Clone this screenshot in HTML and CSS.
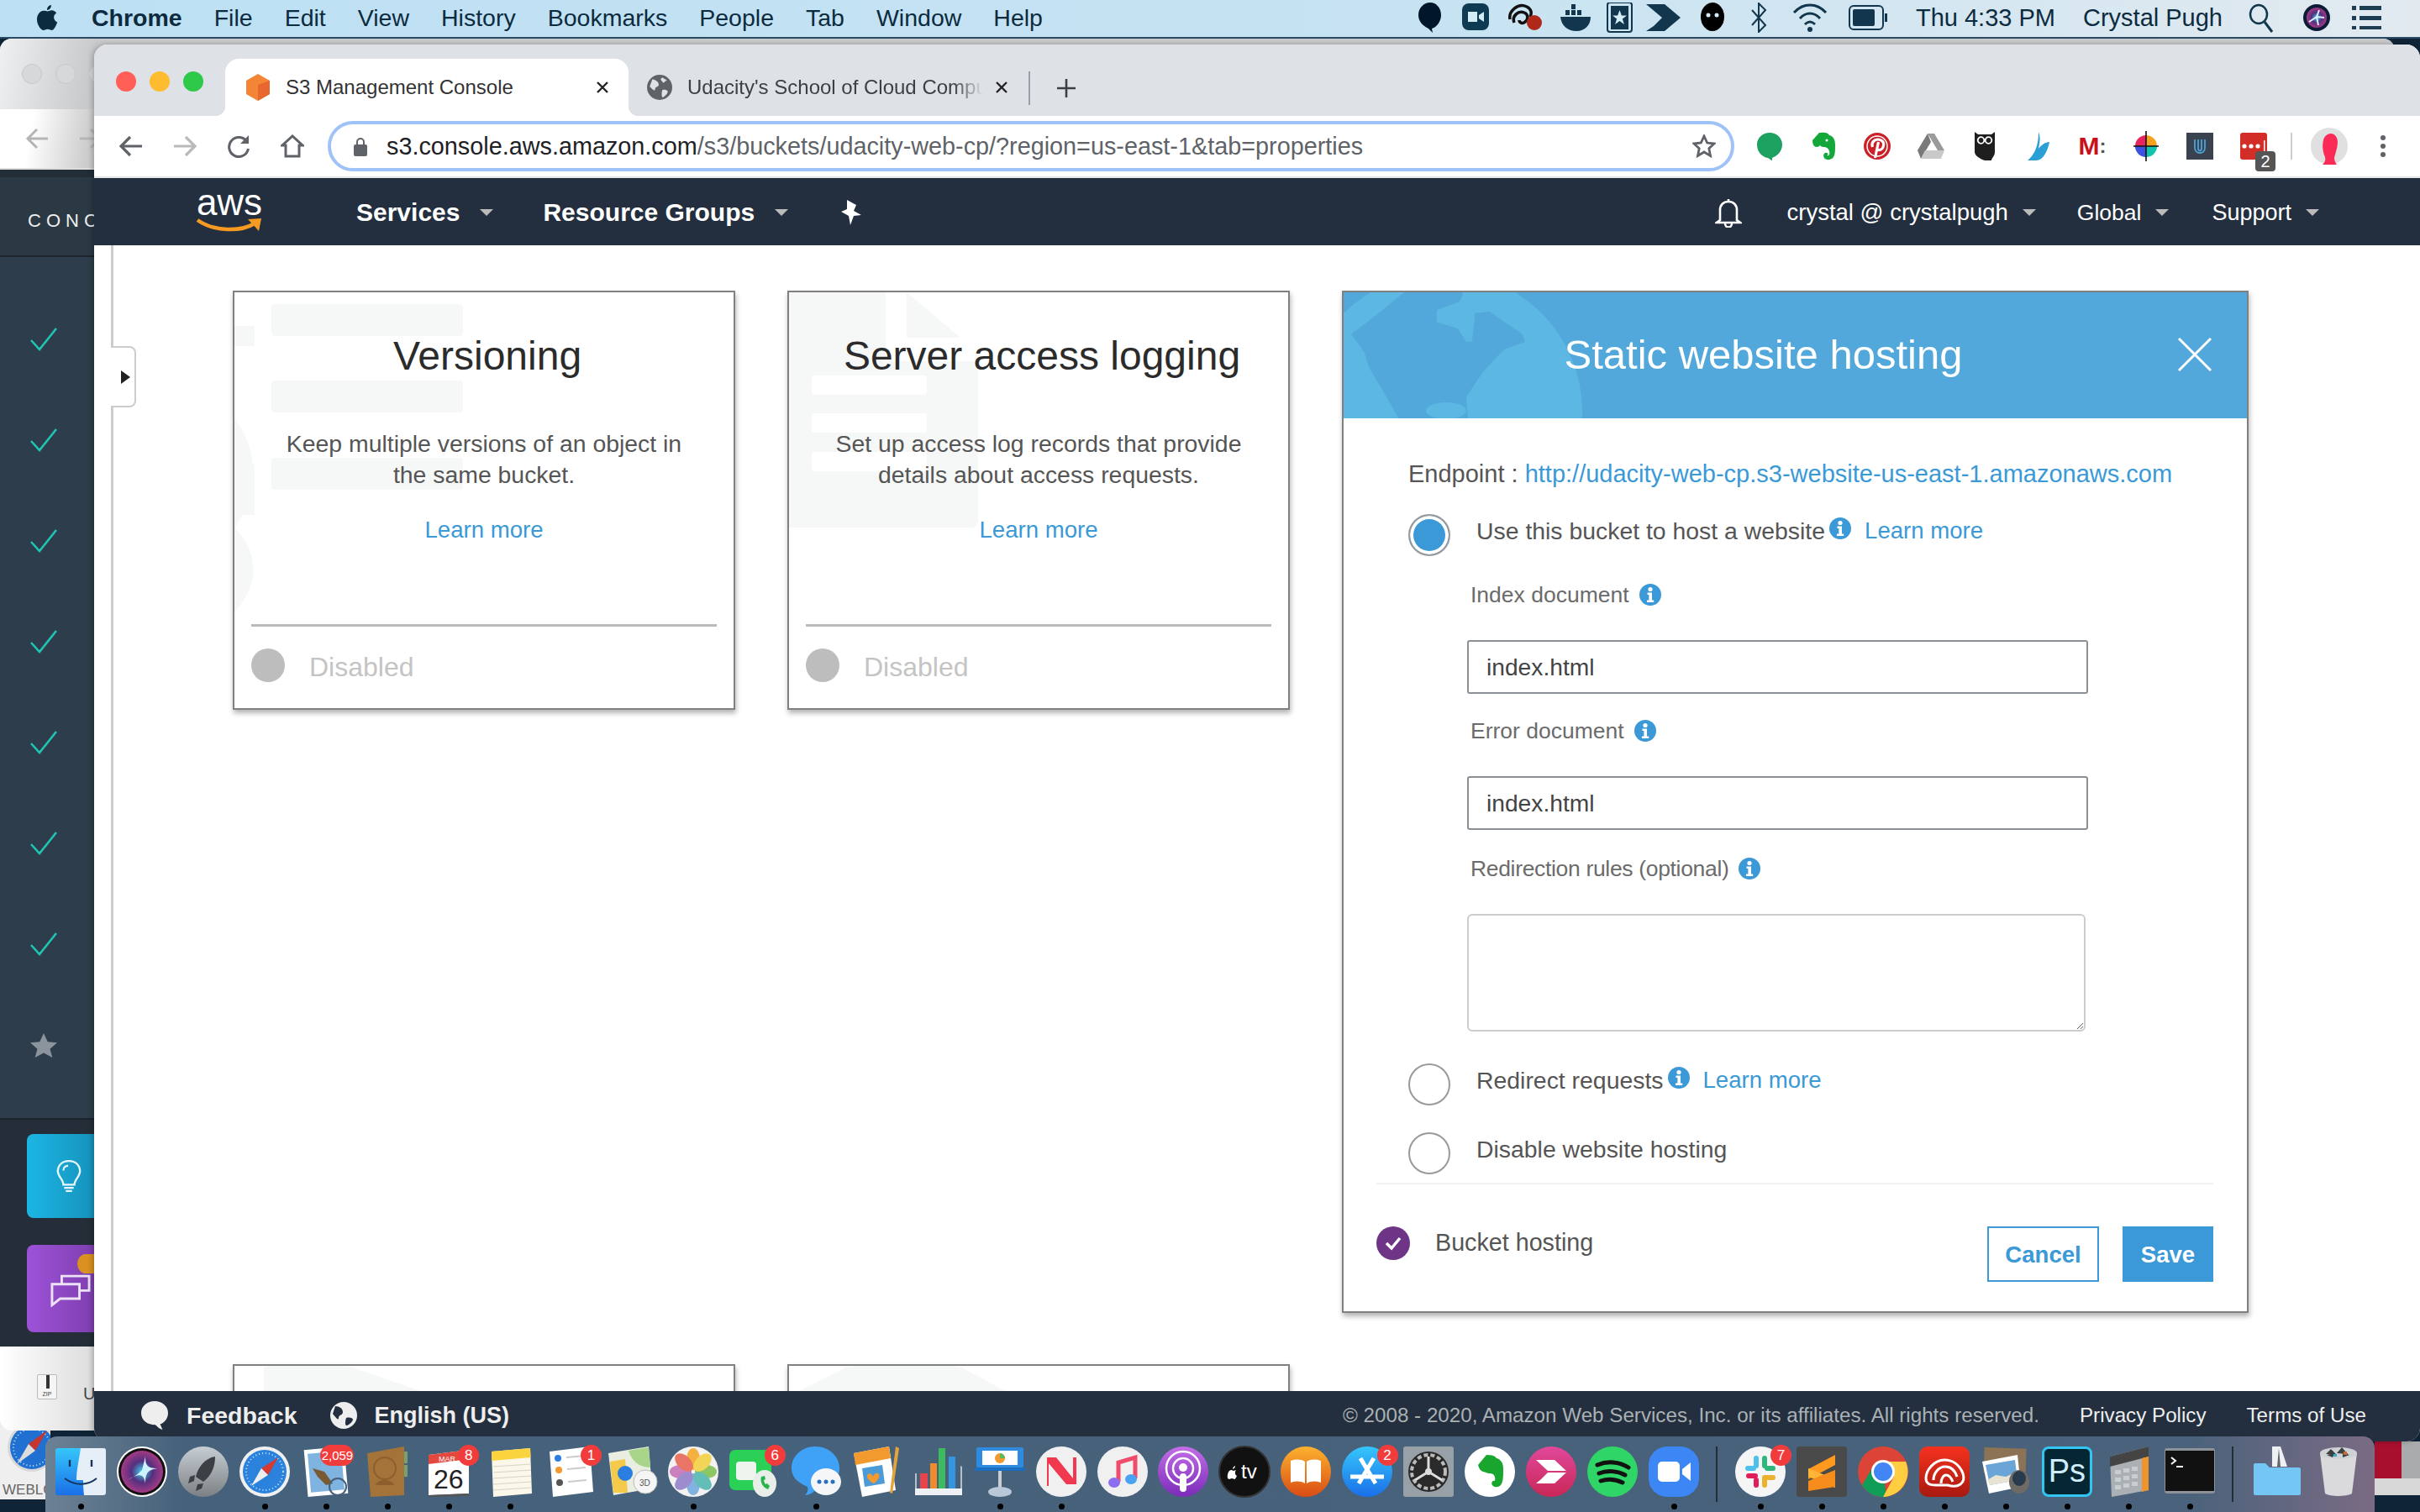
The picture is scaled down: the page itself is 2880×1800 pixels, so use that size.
FILE: index.html
```html
<!DOCTYPE html>
<html lang="en">
<head>
<meta charset="utf-8">
<title>S3 Management Console</title>
<link rel="stylesheet" href="styles.css">
</head>
<body>
<svg class="defs" aria-hidden="true">
  <defs>
    <linearGradient id="g-sky" x1="0" y1="0" x2="0" y2="1"><stop offset="0" stop-color="#36c6fb"/><stop offset="1" stop-color="#1a6fe8"/></linearGradient>
    <radialGradient id="g-siri"><stop offset="0" stop-color="#3fd0ea"/><stop offset=".5" stop-color="#53307f"/><stop offset="1" stop-color="#a43a85"/></radialGradient>
    <linearGradient id="g-rock" x1="0" y1="0" x2="0" y2="1"><stop offset="0" stop-color="#c7ced3"/><stop offset="1" stop-color="#7b8084"/></linearGradient>
    <linearGradient id="g-orange" x1="0" y1="0" x2="0" y2="1"><stop offset="0" stop-color="#fdb22f"/><stop offset="1" stop-color="#d94c14"/></linearGradient>
    <linearGradient id="g-pod" x1="0" y1="0" x2="0" y2="1"><stop offset="0" stop-color="#c46ee8"/><stop offset="1" stop-color="#7a2bb8"/></linearGradient>
    <linearGradient id="g-pink" x1="0" y1="0" x2="0" y2="1"><stop offset="0" stop-color="#e0489a"/><stop offset="1" stop-color="#c92757"/></linearGradient>
    <linearGradient id="g-red" x1="0" y1="0" x2="0" y2="1"><stop offset="0" stop-color="#f5321e"/><stop offset="1" stop-color="#a8190f"/></linearGradient>
    <symbol id="i-info" viewBox="0 0 26 26"><circle cx="13" cy="13" r="13" fill="#3a99d6"/><circle cx="13" cy="6.5" r="2.6" fill="#fff"/><path d="M9.5 10.5h5.5v9h2.2v2.4H9v-2.4h2.4v-6.6H9.500z" fill="#fff"/></symbol>
    <symbol id="i-check" viewBox="0 0 32 30"><path d="M1 16l10 11L31 2" fill="none" stroke="#20c5b4" stroke-width="2.600"/></symbol>
  </defs>
</svg>

<div class="desktop">
  <div class="desk-tile desk-red"></div>
  <div class="desk-tile desk-grey"></div>
  <div class="desk-tile desk-band"></div>
  <div class="desk-tile desk-label">
    <svg class="desk-safari" viewBox="0 0 60 60"><circle cx="30" cy="30" r="29" fill="#d8d8d8"/><circle cx="30" cy="30" r="26" fill="#1f70d0"/><circle cx="30" cy="30" r="22" fill="none" stroke="#cfe6fb" stroke-width="2" stroke-dasharray="1 3"/><path d="M48 10L34 34 26 26z" fill="#c8352f"/><path d="M12 50L26 26 34 34z" fill="#ddd"/></svg>
    <span class="desk-name">WEBLOG</span>
  </div>

  <header class="menubar">
    <svg class="m-apple" viewBox="0 0 26 32"><path d="M18 1c.2 3-2.300 6-5 6-.3-3 2.300-6 5-6zM13.300 8.500c1.400 0 3-1.300 5.200-1.300 2.300 0 4.500 1.300 5.700 3.200-4.700 2.700-3.700 9 1 11-1.400 4-4 9.600-6.700 9.600-1.900 0-2.500-1.200-4.800-1.200s-3 1.200-4.800 1.200C5.300 31 1 24 1 18.300c0-6 3.800-10.500 8-10.500 2 0 3.200.7 4.300.7z" fill="#0c2b3f"/></svg>
    <nav class="m-items">
      <b>Chrome</b><span>File</span><span>Edit</span><span>View</span><span>History</span><span>Bookmarks</span><span>People</span><span>Tab</span><span>Window</span><span>Help</span>
    </nav>
    <div class="m-status">
      <svg width="52" height="36" viewBox="0 0 52 36"><path d="M14 0c7 0 13 6 13 15 0 8-6 15-11 16l1 5-5-5C6 28 0 23 0 15 0 6 7 0 14 0z" fill="#02162b"/></svg>
      <svg width="53" height="36" viewBox="0 0 53 36"><rect y="1" width="32" height="32" rx="8" fill="#0e3a52"/><path d="M7 11h11v12H7zM20 15l6-4v12l-6-4z" fill="#d4ecf6"/></svg>
      <svg width="63" height="36" viewBox="0 0 63 36"><path d="M4 20C2 10 14 0 24 5c6 3 6 8 4 12M9 24c-3-8 5-15 12-12 5 2 5 8 1 11-3 3-7 1-7-2" fill="none" stroke="#111" stroke-width="3.500"/><circle cx="33" cy="24" r="9" fill="#b0281a"/></svg>
      <svg width="56" height="36" viewBox="0 0 56 36"><path d="M1 17h36c0 10-7 17-17 17C9 34 2 27 1 17z" fill="#12364d"/><path d="M7 9h5v6H7zM14 9h5v6h-5zM21 9h5v6h-5zM14 2h5v6h-5z" fill="#12364d"/></svg>
      <svg width="47" height="36" viewBox="0 0 47 36"><rect x="1" y="0" width="29" height="35" rx="3" fill="none" stroke="#12364d" stroke-width="2"/><rect x="5" y="4" width="21" height="28" fill="#12364d"/><path d="M15.500 9l2.400 6.500h6l-5 4 2 6.500-5.400-4-5.400 4 2-6.500-5-4h6z" fill="#d4ecf6"/></svg>
      <svg width="65" height="36" viewBox="0 0 65 36"><path d="M0 2h22l19 16H19zM0 34h22l19-16H19L9 28z" fill="#12364d"/></svg>
      <svg width="59" height="36" viewBox="0 0 59 36"><ellipse cx="14" cy="17" rx="14" ry="17" fill="#000"/><circle cx="9" cy="15" r="2.500" fill="#d4ecf6"/><circle cx="19" cy="15" r="2.500" fill="#d4ecf6"/></svg>
      <svg width="50" height="36" viewBox="0 0 50 36"><path d="M2 9l16 18-8 8V1l8 8L2 27" fill="none" stroke="#12364d" stroke-width="2"/></svg>
      <svg width="67" height="36" viewBox="0 0 67 36"><path d="M2 12c11-12 27-12 38 0M9 19c7-8 17-8 24 0M15 26c4-4 8-4 12 0" fill="none" stroke="#12364d" stroke-width="3"/><circle cx="21" cy="32" r="3" fill="#12364d"/></svg>
      <svg width="80" height="36" viewBox="0 0 80 36"><rect x="1" y="4" width="40" height="28" rx="5" fill="none" stroke="#12364d" stroke-width="2"/><rect x="5" y="8" width="26" height="20" rx="2" fill="#12364d"/><rect x="43" y="13" width="3" height="10" fill="#12364d"/></svg>
      <span class="m-time">Thu 4:33 PM</span>
      <span class="m-user">Crystal Pugh</span>
      <svg class="m-search" width="30" height="36" viewBox="0 0 30 36"><ellipse cx="12" cy="14" rx="10" ry="11" fill="none" stroke="#12364d" stroke-width="2.500"/><path d="M19 23l9 12" stroke="#12364d" stroke-width="3"/></svg>
      <svg class="m-siri" width="32" height="32" viewBox="0 0 32 32"><circle cx="16" cy="16" r="16" fill="#0b1c36"/><circle cx="16" cy="16" r="12" fill="url(#g-siri)"/><path d="M7 21L16 15l3-8M16 15l9 1M16 15l2 10" stroke="#def" stroke-width="2" fill="none"/></svg>
      <svg class="m-list" width="35" height="28" viewBox="0 0 35 28"><path d="M0 0h5v5H0zM9 0h26v5H9zM0 12h5v5H0zM9 12h26v5H9zM0 24h5v4H0zM9 24h26v4H9z" fill="#1d3e52"/></svg>
    </div>
  </header>

  <div class="win-back">
    <div class="wb-head">
      <i class="wb-dot"></i><i class="wb-dot"></i><i class="wb-dot"></i>
    </div>
    <div class="wb-tools">
      <svg class="wb-arrow" viewBox="0 0 28 28"><path d="M27 14H3M14 3L3 14l11 11" fill="none" stroke="#b5b5b5" stroke-width="3"/></svg>
      <svg class="wb-arrow" viewBox="0 0 28 28"><path d="M1 14h24M14 3l11 11-11 11" fill="none" stroke="#b5b5b5" stroke-width="3"/></svg>
    </div>
    <div class="wb-nav"><span>CONCEPTS</span></div>
    <ul class="wb-side">
      <li><svg><use href="#i-check"/></svg></li>
      <li><svg><use href="#i-check"/></svg></li>
      <li><svg><use href="#i-check"/></svg></li>
      <li><svg><use href="#i-check"/></svg></li>
      <li><svg><use href="#i-check"/></svg></li>
      <li><svg><use href="#i-check"/></svg></li>
      <li><svg><use href="#i-check"/></svg></li>
      <li><svg viewBox="0 0 34 32"><path d="M17 1l5 11 12 1-9 8 3 11-11-6-11 6 3-11-9-8 12-1z" fill="#8b949c"/></svg></li>
    </ul>
    <div class="wb-btns">
      <div class="wb-btn wb-blue">
        <svg viewBox="0 0 34 42"><path d="M17 2C8 2 3 8 3 15c0 7 7 10 7 17h14c0-7 7-10 7-17 0-7-5-13-14-13zM11 36h12M13 40h8M10 14c0-4 3-6 6-6" fill="none" stroke="#e6f6fc" stroke-width="2.500"/></svg>
      </div>
      <div class="wb-btn wb-purple">
        <svg viewBox="0 0 50 44"><path d="M2 16h34v18H12L2 42zM14 16V6h34v18H36" fill="none" stroke="#ece3f6" stroke-width="3"/></svg>
        <i class="wb-notif"></i>
      </div>
    </div>
    <div class="wb-dl">
      <span class="wb-zip"><i></i>ZIP</span>
      <span class="wb-u">U</span>
    </div>
  </div>

  <div class="win-front">
    <div class="tabstrip">
      <div class="lights"><i class="l-r"></i><i class="l-y"></i><i class="l-g"></i></div>
      <div class="tab tab-on">
        <svg class="fav" viewBox="0 0 30 32"><path d="M15 0l14 8v16l-14 8-14-8V8z" fill="#f58536"/><path d="M15 13l14-5v16l-14 8z" fill="#e8672f"/></svg>
        <span class="tab-text">S3 Management Console</span>
        <svg class="tab-x" viewBox="0 0 16 16"><path d="M2 2l12 12M14 2L2 14" stroke="#222" stroke-width="2.400"/></svg>
      </div>
      <div class="tab tab-off">
        <svg class="fav" viewBox="0 0 28 28"><circle cx="14" cy="14" r="14" fill="#5f6368"/><path d="M6 5c4 1 7 3 7 6s-4 2-4 5-3 0-6-3M17 17c3-1 6 0 6 2s-3 5-5 6-2-5-1-8zM17 3l5 3-4 3-3-4z" fill="#dee1e6"/></svg>
        <span class="tab-text tab-fade">Udacity's School of Cloud Computing</span>
        <svg class="tab-x" viewBox="0 0 16 16"><path d="M2 2l12 12M14 2L2 14" stroke="#222" stroke-width="2.400"/></svg>
      </div>
      <i class="tab-sep"></i>
      <svg class="tab-new" viewBox="0 0 24 24"><path d="M12 1v22M1 12h22" stroke="#3c4043" stroke-width="2.600"/></svg>
    </div>

    <div class="toolbar">
      <span class="tb-btn"><svg width="30" height="28" viewBox="0 0 30 28"><path d="M28 14H3M14 3L3 14l11 11" fill="none" stroke="#5f6368" stroke-width="3.200"/></svg></span>
      <span class="tb-btn"><svg width="30" height="28" viewBox="0 0 30 28"><path d="M2 14h25M16 3l11 11-11 11" fill="none" stroke="#b9babb" stroke-width="3.200"/></svg></span>
      <span class="tb-btn"><svg width="28" height="28" viewBox="0 0 28 28"><path d="M24 9a11.500 11.500 0 1 0 1.500 8" fill="none" stroke="#5f6368" stroke-width="3"/><path d="M26 1v10H16z" fill="#5f6368"/></svg></span>
      <span class="tb-btn"><svg width="28" height="28" viewBox="0 0 28 28"><path d="M14 2L2 13h4v13h16V13h4z" fill="none" stroke="#5f6368" stroke-width="3"/></svg></span>
      <div class="omni">
        <svg class="omni-lock" viewBox="0 0 18 24"><path d="M5 10V7a4 4 0 0 1 8 0v3" fill="none" stroke="#5f6368" stroke-width="2"/><rect x="1" y="10" width="16" height="14" rx="2" fill="#5f6368"/></svg>
        <span class="omni-url"><b>s3.console.aws.amazon.com</b>/s3/buckets/udacity-web-cp/?region=us-east-1&amp;tab=properties</span>
        <svg class="omni-star" viewBox="0 0 28 28"><path d="M14 2l3.700 8 8.300 1-6.200 5.700 1.700 8.800-7.500-4.500-7.500 4.500 1.700-8.800L2 11l8.300-1z" fill="none" stroke="#5f6368" stroke-width="2.800"/></svg>
      </div>
      <div class="exts">
        <span class="ext"><svg width="32" height="34" viewBox="0 0 32 34"><path d="M16 1c8 0 15 6 15 14 0 9-7 14-12 16v3c-1 0-3-2-5-3C7 30 1 24 1 15 1 7 8 1 16 1z" fill="#1ca160"/></svg></span>
        <span class="ext"><svg width="32" height="34" viewBox="0 0 32 34"><path d="M3 10L11 1h2c6-1 9 1 10 3 5 1 7 6 7 11 0 7 0 12-2 15-3 4-9 4-11 1-2-3 0-7 3-6 2 0 2 3 0 3 3 1 4-2 3-5-1-4-4-5-7-5-2 0-3-1-4-2-1 1-2 2-4 2-3 0-5-3-5-8z" fill="#14a83a"/><circle cx="20" cy="10" r="1.500" fill="#fff"/></svg></span>
        <span class="ext"><svg width="32" height="32" viewBox="0 0 32 32"><circle cx="16" cy="16" r="16" fill="#cb2027"/><circle cx="16" cy="16" r="12" fill="none" stroke="#fff" stroke-width="1.500"/><path d="M13.500 30l4-19M10.500 17c-2-5 2-9 6.500-9s7.500 3 6.500 7.500c-1 5-6 6.500-8 3.500" fill="none" stroke="#fff" stroke-width="3.200"/></svg></span>
        <span class="ext"><svg width="32" height="30" viewBox="0 0 32 30"><path d="M12 0h8l12 20H24z" fill="#9b9b9b"/><path d="M12 0L0 20l4 10 12-20z" fill="#7a7a7a"/><path d="M4 30h24l4-10H9z" fill="#c9c9c9"/></svg></span>
        <span class="ext"><svg width="24" height="34" viewBox="0 0 24 34"><path d="M0 0l4 3h16l4-3v24c0 5-4 7-4 10H12C6 32 0 28 0 24z" fill="#1e1e1e"/><circle cx="7.500" cy="10" r="3.800" fill="none" stroke="#fff" stroke-width="1.800"/><circle cx="16.500" cy="10" r="3.800" fill="none" stroke="#fff" stroke-width="1.800"/></svg></span>
        <span class="ext"><svg width="26" height="34" viewBox="0 0 26 34"><path d="M13 0c3 8 1 14 0 20 3-4 8-8 13-8-2 10-7 22-16 22H0c6-5 13-14 13-34z" fill="#2a9fd6"/></svg></span>
        <span class="ext ext-m"><b>M</b><i>:</i></span>
        <span class="ext"><svg width="32" height="36" viewBox="0 0 32 36"><circle cx="16" cy="18" r="13" fill="#fff"/><path d="M16 18L16 5a13 13 0 0 1 13 13z" fill="#f6a21d"/><path d="M16 18L29 18a13 13 0 0 1-13 13z" fill="#12c4b0"/><path d="M16 18L16 31A13 13 0 0 1 3 18z" fill="#3c52e0"/><path d="M16 18L3 18A13 13 0 0 1 16 5z" fill="#e8245f"/><path d="M16 0v36M1 18h30" stroke="#111" stroke-width="1.600"/></svg></span>
        <span class="ext"><svg width="32" height="32" viewBox="0 0 32 32"><rect width="32" height="32" fill="#39424e"/><path d="M10 8v10c0 8 12 8 12 0V8M14 8v11c0 3 4 3 4 0V8" fill="none" stroke="#4aa3d8" stroke-width="1.800"/></svg></span>
        <span class="ext ext-lp">
          <svg width="32" height="32" viewBox="0 0 32 32"><rect width="32" height="32" rx="3" fill="#d32d27"/><circle cx="5" cy="16" r="2.600" fill="#fff"/><circle cx="13" cy="16" r="2.600" fill="#fff"/><circle cx="21" cy="16" r="2.600" fill="#fff"/><rect x="28" y="9" width="1.500" height="14" fill="#fff"/></svg>
          <b class="ext-badge">2</b>
        </span>
      </div>
      <i class="tb-sep"></i>
      <span class="tb-btn"><svg width="44" height="44" viewBox="0 0 44 44"><circle cx="22" cy="22" r="22" fill="#e0e0e0"/><path d="M14 44c3-3 4-6 3-9-2-5-4-12-2-20 1-5 5-8 9-8s8 4 8 10c0 7-3 14-4 19 0 3 1 5 3 8z" fill="#fb2a57"/></svg></span>
      <span class="tb-btn"><svg width="6" height="26" viewBox="0 0 6 26"><circle cx="3" cy="3" r="3" fill="#5f6368"/><circle cx="3" cy="13" r="3" fill="#5f6368"/><circle cx="3" cy="23" r="3" fill="#5f6368"/></svg></span>
    </div>

    <div class="awsnav">
      <div class="aws-logo"><span>aws</span>
        <svg viewBox="0 0 80 20"><path d="M2 3c20 14 52 14 68 4" fill="none" stroke="#f79a22" stroke-width="4.500"/><path d="M62 2l16-1-3 15z" fill="#f79a22"/></svg>
      </div>
      <div class="nav-main">
        <b class="nav-a">Services</b><i class="caret caret-b"></i>
        <b class="nav-b">Resource Groups</b><i class="caret caret-b"></i>
        <svg class="nav-pin" viewBox="0 0 26 30"><path d="M9 0l11 6-3 7 9 5-9 1-4 11-2-11-9-5 7-3z" fill="#fff"/></svg>
      </div>
      <div class="nav-right">
        <svg class="nav-bell" viewBox="0 0 32 36"><path d="M16 2v3M6 27V15C6 9 10 5 16 5s10 4 10 10v12l4 3H2zM12 31c0 6 8 6 8 0" fill="none" stroke="#fff" stroke-width="2.600"/></svg>
        <span class="nav-acct">crystal @ crystalpugh</span><i class="caret"></i>
        <span class="nav-global">Global</span><i class="caret"></i>
        <span class="nav-support">Support</span><i class="caret"></i>
      </div>
    </div>

    <div class="content">
      <div class="rail"><button class="rail-tab" type="button"><i></i></button></div>
      <main class="grid">
        <section class="card">
          <svg class="wm" viewBox="0 0 594 495"><path d="M0 40h24v24H0zM0 150c30 40 30 90 0 130zM0 205h24v60H0zM0 380c30-30 30-70 0-100z" fill="#f6f7f7"/><rect x="44" y="14" width="228" height="38" rx="4" fill="#f6f7f7"/><rect x="44" y="105" width="228" height="38" rx="4" fill="#f6f7f7"/><rect x="44" y="197" width="228" height="38" rx="4" fill="#f6f7f7"/></svg>
          <h2 class="card-title">Versioning</h2>
          <p class="card-desc">Keep multiple versions of an object in the same bucket.</p>
          <a class="link card-link">Learn more</a>
          <div class="card-foot"><i class="dot"></i><span>Disabled</span></div>
        </section>
        <section class="card">
          <svg class="wm" viewBox="0 0 594 495"><path d="M0 0h115v82h110v190a8 8 0 0 1-8 8H0z" fill="#f6f7f7"/><path d="M140 0h0l64 54h-64z" fill="#f6f7f7"/><rect x="27" y="99" width="137" height="23" rx="4" fill="#fff"/><rect x="27" y="144" width="137" height="23" rx="4" fill="#fff"/><rect x="27" y="190" width="137" height="23" rx="4" fill="#fff"/></svg>
          <h2 class="card-title">Server access logging</h2>
          <p class="card-desc">Set up access log records that provide details about access requests.</p>
          <a class="link card-link">Learn more</a>
          <div class="card-foot"><i class="dot"></i><span>Disabled</span></div>
        </section>
        <section class="dialog">
          <header class="dlg-head">
            <svg class="dlg-globe" viewBox="0 0 300 150">
              <circle cx="118" cy="142" r="166" fill="#5cb7e2"/>
              <path transform="translate(-19 -18) scale(.7018 .357)" d="M130 50L230 50 225 80 185 110 185 150 220 170 235 215 245 215 250 120 275 115 300 150 330 190 335 215 300 240 280 280 262 320 235 400 238 470 120 470 100 400 70 300 62 250 40 190 80 130z" fill="#52a8da"/>
              <ellipse cx="122" cy="141" rx="24" ry="10" fill="#5cb7e2"/>
            </svg>
            <h2 class="dlg-title">Static website hosting</h2>
            <svg class="dlg-x" viewBox="0 0 40 40"><path d="M1 1l38 38M39 1L1 39" stroke="#fff" stroke-width="3"/></svg>
          </header>
          <div class="dlg-body">
            <div class="dlg-opts">
              <p class="endpoint">Endpoint : <a class="link">http://udacity-web-cp.s3-website-us-east-1.amazonaws.com</a></p>
              <div class="opt opt-1"><i class="radio radio-on"></i><span class="opt-text">Use this bucket to host a website</span><svg class="info"><use href="#i-info"/></svg><a class="link opt-link">Learn more</a></div>
              <label class="f-label f-l1">Index document <svg class="info"><use href="#i-info"/></svg></label>
              <input class="f-input" value="index.html">
              <label class="f-label f-l2">Error document <svg class="info"><use href="#i-info"/></svg></label>
              <input class="f-input" value="index.html">
              <label class="f-label f-l1 f-l3">Redirection rules (optional) <svg class="info"><use href="#i-info"/></svg></label>
              <textarea class="f-area"></textarea>
              <div class="opt opt-2"><i class="radio"></i><span class="opt-text">Redirect requests</span><svg class="info"><use href="#i-info"/></svg><a class="link opt-link">Learn more</a></div>
              <div class="opt opt-3"><i class="radio"></i><span class="opt-text">Disable website hosting</span></div>
            </div>
            <hr class="dlg-rule">
            <div class="dlg-foot">
              <div class="dlg-status">
                <svg viewBox="0 0 40 40"><circle cx="20" cy="20" r="20" fill="#6e3587"/><path d="M12 20l6 6 10-12" fill="none" stroke="#fff" stroke-width="3.500"/></svg>
                <span>Bucket hosting</span>
              </div>
              <div class="dlg-btns">
                <button class="btn btn-ghost" type="button">Cancel</button>
                <button class="btn btn-fill" type="button">Save</button>
              </div>
            </div>
          </div>
        </section>
        <section class="card card-next">
          <svg class="wm" viewBox="0 0 594 495"><path d="M35 0h100l92 32 100 100H35z" fill="#f6f7f7"/></svg>
        </section>
        <section class="card card-next">
          <svg class="wm" viewBox="0 0 594 495"><path d="M72 0H202L261 32l19 68H0L8 32z" fill="#f6f7f7"/></svg>
        </section>
      </main>
    </div>

    <footer class="awsfoot">
      <div class="foot-left">
        <svg class="foot-ic" viewBox="0 0 34 36"><path d="M17 0c9 0 17 6 17 15 0 8-6 13-10 14l3 7c-4-1-7-4-9-6C8 30 0 24 0 15 0 6 8 0 17 0z" fill="#eee"/></svg>
        <b class="foot-fb">Feedback</b>
        <svg class="foot-ic foot-globe" viewBox="0 0 32 32"><circle cx="16" cy="16" r="16" fill="#eee"/><path d="M6 5c5 0 9 3 9 7s-5 3-5 7-4-1-7-5zM19 19c4-1 8 0 8 2s-4 6-7 7-2-6-1-9z" fill="#232f3e"/></svg>
        <b class="foot-lang">English (US)</b>
      </div>
      <div class="foot-right">
        <span class="foot-copy">© 2008 - 2020, Amazon Web Services, Inc. or its affiliates. All rights reserved.</span>
        <a>Privacy Policy</a>
        <a>Terms of Use</a>
      </div>
    </footer>
  </div>

  <div class="dock">
    <div class="di on"><svg viewBox="0 0 60 60"><rect width="60" height="56" y="2" rx="3" fill="url(#g-sky)"/><path d="M30 2h27a3 3 0 0 1 3 3v50a3 3 0 0 1-3 3H34c-1-8-1-14-1-18H25c0-12 3-24 5-38z" fill="#e6eff7"/><path d="M17 16v8M43 16v8" stroke="#17345a" stroke-width="2.400"/><path d="M11 38c12 9 27 9 38 0" fill="none" stroke="#17345a" stroke-width="2"/></svg></div>
    <div class="di"><svg viewBox="0 0 60 60"><circle cx="30" cy="30" r="30" fill="#fff"/><circle cx="30" cy="30" r="28" fill="#111"/><circle cx="30" cy="30" r="25" fill="url(#g-siri)"/><path d="M12 40C22 36 26 32 30 28l4-16c0 10 2 14 14 14-10 2-14 4-14 18-2-10-4-14-22-4z" fill="#cdf3ff"/></svg></div>
    <div class="di"><svg viewBox="0 0 60 60"><circle cx="30" cy="30" r="30" fill="url(#g-rock)"/><path d="M44 12c0 12-4 22-14 30l-9-6C24 24 32 14 44 12zM20 34l-6 2-2 8 7-3zM30 44l-2 6-7 3 2-8z" fill="#3c4045"/></svg></div>
    <div class="di on"><svg viewBox="0 0 60 60"><circle cx="30" cy="30" r="30" fill="#f0f0f0"/><circle cx="30" cy="30" r="26" fill="#2a82dc"/><circle cx="30" cy="30" r="22" fill="none" stroke="#cfe6fb" stroke-width="2" stroke-dasharray="1 3"/><path d="M46 13L34 34 26 26z" fill="#d8382f"/><path d="M14 47L26 26 34 34z" fill="#eee"/></svg></div>
    <div class="di on"><svg viewBox="0 0 60 60"><rect x="6" y="2" width="48" height="56" fill="#fff" transform="rotate(-5 30 30)"/><rect x="10" y="7" width="40" height="46" fill="#7fb4e0" transform="rotate(-5 30 30)"/><path d="M14 26l14 4 10 14-8 2-10-10z" fill="#7a5a35"/><circle cx="44" cy="48" r="10" fill="none" stroke="#47607a" stroke-width="2"/></svg><span class="badge badge-wide">2,059</span></div>
    <div class="di on"><svg viewBox="0 0 60 60"><path d="M6 8L50 0v58L10 60z" fill="#a4733a"/><path d="M50 6h4v14h-4zM50 22h4v14h-4z" fill="#75a36b"/><circle cx="27" cy="26" r="13" fill="none" stroke="#8c5f2d" stroke-width="2"/><path d="M16 46c2-8 20-8 22 0z" fill="#8c5f2d"/></svg></div>
    <div class="di on"><svg viewBox="0 0 60 60"><path d="M6 10L54 4v52L6 58z" fill="#fff"/><path d="M6 10L54 4v11L6 21z" fill="#e2483d"/><text class="cal-m" x="18" y="18">MAR</text><text class="cal-d" x="12" y="50">26</text><path d="M6 58l48-2v3L6 60z" fill="#555"/></svg><span class="badge">8</span></div>
    <div class="di on"><svg viewBox="0 0 60 60"><path d="M8 6L54 2l2 54-46 4z" fill="#fbf8ea"/><path d="M8 6L54 2l.5 11-46 4z" fill="#fbd43d"/><path d="M10 24l45-3M10 31l45-3M10 38l45-3M10 45l45-3M10 52l45-3" stroke="#d8d4c4"/></svg></div>
    <div class="di"><svg viewBox="0 0 60 60"><path d="M4 6L52 0l4 54-48 6z" fill="#fff"/><circle cx="14" cy="14" r="4" fill="#2a7de1"/><circle cx="15" cy="28" r="4" fill="#f29a2e"/><circle cx="16" cy="43" r="4" fill="#555"/><path d="M24 13l22-2M25 27l22-2M26 42l22-2" stroke="#ccc" stroke-width="2"/></svg><span class="badge">1</span></div>
    <div class="di"><svg viewBox="0 0 60 60"><path d="M2 8L50 0l4 50-46 8z" fill="#e9eee0"/><path d="M4 18l18-3 3 40H8z" fill="#f5c94a"/><path d="M26 5l24-4 2 24c-14 0-22-8-26-20z" fill="#a8d58a"/><circle cx="22" cy="32" r="9" fill="#2a7de1"/><circle cx="46" cy="42" r="14" fill="#f5f5f5" stroke="#bbb"/><text class="map-3d" x="39" y="47">3D</text></svg></div>
    <div class="di on"><svg viewBox="0 0 60 60"><circle cx="30" cy="30" r="30" fill="#f2f2f2"/><g opacity=".85"><ellipse cx="30" cy="15" rx="8" ry="13" fill="#f5a623"/><ellipse cx="30" cy="45" rx="8" ry="13" fill="#6fa8dc"/><ellipse cx="15" cy="30" rx="13" ry="8" fill="#c56bb5"/><ellipse cx="45" cy="30" rx="13" ry="8" fill="#7cbf4b"/><ellipse cx="19" cy="19" rx="8" ry="13" fill="#e8604c" transform="rotate(-45 19 19)"/><ellipse cx="41" cy="41" rx="8" ry="13" fill="#4cb5ae" transform="rotate(-45 41 41)"/><ellipse cx="41" cy="19" rx="8" ry="13" fill="#f2d13b" transform="rotate(45 41 19)"/><ellipse cx="19" cy="41" rx="8" ry="13" fill="#8f7cc9" transform="rotate(45 19 41)"/></g></svg></div>
    <div class="di"><svg viewBox="0 0 60 60"><rect y="4" width="50" height="48" rx="7" fill="#2bd156"/><rect x="8" y="18" width="24" height="22" rx="4" fill="#eef5ee"/><ellipse cx="42" cy="44" rx="14" ry="16" fill="#e8efe8"/><path d="M38 36c-2 6 2 13 8 15l2-4-3-3-2 1c-1-2-2-3-2-5l2-1-1-4z" fill="#27b34d"/></svg><span class="badge">6</span></div>
    <div class="di on"><svg viewBox="0 0 60 60"><path d="M29 0c16 0 29 11 29 26 0 14-12 25-28 25-3 4-8 7-13 7 3-3 4-6 3-10C8 43 1 36 1 26 1 11 14 0 29 0z" fill="#3fa2f6"/><ellipse cx="42" cy="42" rx="18" ry="16" fill="#f4f6f8"/><circle cx="34" cy="42" r="2.500" fill="#2a6fc0"/><circle cx="42" cy="42" r="2.500" fill="#2a6fc0"/><circle cx="50" cy="42" r="2.500" fill="#2a6fc0"/></svg></div>
    <div class="di"><svg viewBox="0 0 60 60"><path d="M2 8L44 0l8 52-40 8z" fill="#fff"/><path d="M2 8L44 0l2 14L4 22z" fill="#f29a2e"/><path d="M12 26l24-4 3 22-24 4z" fill="#4c9bd6"/><path d="M18 34c4-4 6 0 7 2 1-3 4-6 7-3 2 3-2 8-6 11-4-2-9-6-8-10z" fill="#f29a2e"/><path d="M52 0l4 2-8 54-3-1z" fill="#e8a23a"/></svg></div>
    <div class="di"><svg viewBox="0 0 60 60"><rect x="30" y="2" width="8" height="50" fill="#3dbb5f"/><rect x="20" y="20" width="8" height="32" fill="#f08c2e"/><rect x="8" y="32" width="9" height="20" fill="#e8444d"/><rect x="42" y="12" width="8" height="40" fill="#3596e0"/><path d="M2 32v22h56V24l-2-1v27H4V32z" fill="#fff" opacity=".6"/><rect x="2" y="50" width="56" height="8" fill="#eef1f4"/></svg></div>
    <div class="di on"><svg viewBox="0 0 60 60"><rect x="2" y="1" width="56" height="24" rx="2" fill="#2e8be0"/><rect x="9" y="5" width="42" height="17" fill="#fff"/><circle cx="30" cy="14" r="6" fill="#f29a2e"/><path d="M30 14V8a6 6 0 0 1 6 6z" fill="#5cb85c"/><rect x="0" y="25" width="60" height="4" fill="#1a6ec0"/><rect x="28" y="29" width="4" height="22" fill="#c8ced3"/><ellipse cx="30" cy="54" rx="14" ry="6" fill="#b8c8d8"/></svg></div>
    <div class="di on"><svg viewBox="0 0 60 60"><circle cx="30" cy="30" r="30" fill="#f0f0f0"/><path d="M13 13h11l20 25V13h4v32H36L15 20v27h-2z" fill="#f0394f"/></svg></div>
    <div class="di"><svg viewBox="0 0 60 60"><circle cx="30" cy="30" r="30" fill="#f0f0f0"/><path d="M25 42V19l20-6v25" fill="none" stroke="#ef4b6a" stroke-width="5"/><ellipse cx="20" cy="43" rx="7" ry="6" fill="#8d6ef0"/><ellipse cx="40" cy="39" rx="7" ry="6" fill="#4aa3f0"/></svg></div>
    <div class="di"><svg viewBox="0 0 60 60"><circle cx="30" cy="30" r="30" fill="url(#g-pod)"/><circle cx="30" cy="26" r="20" fill="none" stroke="#fff" stroke-width="2.500"/><circle cx="30" cy="26" r="12" fill="none" stroke="#fff" stroke-width="2.500"/><circle cx="30" cy="25" r="5" fill="#fff"/><rect x="26" y="32" width="8" height="22" rx="4" fill="#fff"/></svg></div>
    <div class="di"><svg viewBox="0 0 60 60"><circle cx="30" cy="30" r="30" fill="#111" stroke="#333" stroke-width="2"/><text class="tv-t" x="26" y="38">tv</text><path d="M10 38c-1-6 2-10 4-10s2 1 3 1 2-1 3-1c-2 3-1 6 1 7-1 2-2 4-3 4s-1-1-3-1-2 1-3 1zM16 27c0-2 1-3 3-4 0 2-1 3-3 4z" fill="#fff"/></svg></div>
    <div class="di"><svg viewBox="0 0 60 60"><circle cx="30" cy="30" r="30" fill="url(#g-orange)"/><path d="M29 18c-5-3-11-3-17-1v26c6-2 12-2 17 1zM31 18c5-3 11-3 17-1v26c-6-2-12-2-17 1z" fill="#fff"/></svg></div>
    <div class="di"><svg viewBox="0 0 60 60"><circle cx="30" cy="30" r="30" fill="url(#g-sky)"/><path d="M22 14l18 30M38 14L20 44M10 36h40" stroke="#fff" stroke-width="5"/></svg><span class="badge">2</span></div>
    <div class="di"><svg viewBox="0 0 60 60"><rect width="60" height="60" rx="3" fill="#99a1a8"/><circle cx="30" cy="30" r="24" fill="#2a2a2a"/><circle cx="30" cy="30" r="20" fill="none" stroke="#bbb" stroke-width="4" stroke-dasharray="5 3"/><path d="M30 30V12M30 30L14 40M30 30l16 10" stroke="#ddd" stroke-width="3"/><circle cx="30" cy="30" r="4" fill="#ddd"/></svg></div>
    <div class="di"><svg viewBox="0 0 60 60"><circle cx="30" cy="30" r="30" fill="#fff"/><path d="M16 22l10-12c6 0 10 1 12 4 5 1 8 6 8 12 0 10 0 16-3 20-3 3-8 3-10 0-2-2 0-6 3-5 1-5-1-9-6-9-4 0-6-2-8-2-3-1-5-4-6-8z" fill="#19a62e"/></svg></div>
    <div class="di"><svg viewBox="0 0 60 60"><circle cx="30" cy="30" r="30" fill="url(#g-pink)"/><path d="M12 16h22l14 13H26zM12 44h22l14-13H26l-8 8z" fill="#fff"/></svg></div>
    <div class="di"><svg viewBox="0 0 60 60"><circle cx="30" cy="30" r="30" fill="#2fd566"/><path d="M12 22c12-5 26-4 37 3M14 32c10-4 22-3 31 2M16 41c9-3 18-2 26 2" fill="none" stroke="#111" stroke-width="5" stroke-linecap="round"/></svg></div>
    <div class="di on"><svg viewBox="0 0 60 60"><rect width="60" height="60" rx="22" fill="#3d86f5"/><rect x="11" y="18" width="26" height="24" rx="5" fill="#fff"/><path d="M40 27l10-8v22l-10-8z" fill="#fff"/></svg></div>
    <i class="dock-sep"></i>
    <div class="di on"><svg viewBox="0 0 60 60"><circle cx="30" cy="30" r="30" fill="#f5f5f5"/><g stroke-linecap="round" stroke-width="6" fill="none"><path d="M25 14v9M15 26h7" stroke="#4cc0ea"/><path d="M35 14v9M45 26h-7" stroke="#2eb67d"/><path d="M16 35h8M25 46v-6" stroke="#e01e5a"/><path d="M35 37h10M35 38v8" stroke="#ecb22e"/></g></svg><span class="badge">7</span></div>
    <div class="di on"><svg viewBox="0 0 60 60"><rect width="60" height="60" rx="4" fill="#4a4a4a"/><path d="M46 10L14 27v12l32-17z" fill="#ff9a1f"/><path d="M14 26l32 13v10L14 36z" fill="#ffb437"/><path d="M46 28v20L14 53V41z" fill="#f58c1b"/></svg></div>
    <div class="di on"><svg viewBox="0 0 60 60"><circle cx="30" cy="30" r="30" fill="#db4437"/><path d="M5 46l13-22 12 6 4 30A30 30 0 0 1 5 46z" fill="#0f9d58"/><path d="M30 18h27a30 30 0 0 1-27 42l13-24z" fill="#ffcd40"/><circle cx="30" cy="30" r="14" fill="#fff"/><circle cx="30" cy="30" r="11" fill="#4285f4"/></svg></div>
    <div class="di on"><svg viewBox="0 0 60 60"><rect width="60" height="60" rx="10" fill="url(#g-red)"/><path d="M8 38c0-10 10-22 22-22 10 0 18 6 22 16 4 12-6 18-18 14H20C12 46 8 44 8 38z" fill="none" stroke="#fff" stroke-width="3"/><path d="M17 40c0-8 6-16 14-16s12 6 14 12M26 44c0-6 3-10 6-10s6 3 8 8" fill="none" stroke="#fff" stroke-width="3"/></svg></div>
    <div class="di on"><svg viewBox="0 0 60 60"><rect x="4" y="2" width="50" height="30" fill="#8c7355" transform="rotate(2 30 20)"/><path d="M2 18l42-8 4 38-38 8z" fill="#fff"/><path d="M6 22l35-6 3 24-33 6z" fill="#6ba5d8"/><path d="M8 40l10-6 12 2 14-6v10l-33 6z" fill="#e9e3d3"/><ellipse cx="46" cy="42" rx="12" ry="14" fill="#6f6a63"/><ellipse cx="46" cy="38" rx="8" ry="9" fill="#273b4d"/></svg></div>
    <div class="di on"><div class="ps-ic">Ps</div></div>
    <div class="di on"><svg viewBox="0 0 60 60"><path d="M8 12L54 0v52L10 60z" fill="#aab0b4"/><path d="M8 12L54 0v12L8 24z" fill="#444"/><path d="M46 14l8-2v40l-8 2z" fill="#f0932b"/><g fill="#c9ced1"><rect x="14" y="28" width="7" height="5"/><rect x="24" y="26" width="7" height="5"/><rect x="34" y="24" width="7" height="5"/><rect x="14" y="37" width="7" height="5"/><rect x="24" y="35" width="7" height="5"/><rect x="34" y="33" width="7" height="5"/><rect x="14" y="46" width="7" height="5"/><rect x="24" y="44" width="7" height="5"/><rect x="34" y="42" width="7" height="5"/></g></svg></div>
    <div class="di on"><svg viewBox="0 0 60 60"><rect x="0" y="2" width="60" height="54" rx="3" fill="#8c9298"/><rect x="1" y="5" width="58" height="48" fill="#111"/><path d="M8 13l5 4-5 4" fill="none" stroke="#fff" stroke-width="2"/><path d="M14 24h8" stroke="#fff" stroke-width="2"/></svg></div>
    <i class="dock-sep"></i>
    <div class="di"><svg viewBox="0 0 60 60"><path d="M24 0h10l8 24H24z" fill="#eef1f4"/><path d="M32 2l2 22h-4z" fill="#666"/><path d="M2 22a2 2 0 0 1 2-2h12l5 5h35a2 2 0 0 1 2 2v29a2 2 0 0 1-2 2H4a2 2 0 0 1-2-2z" fill="#74c6f4"/></svg></div>
    <div class="di"><svg viewBox="0 0 60 60"><path d="M8 8h44l-6 48c-6 4-26 4-32 0z" fill="#e6e6e6" opacity=".9"/><ellipse cx="30" cy="8" rx="22" ry="7" fill="#cfd2d4"/><path d="M15 9l6-6 6 6zM28 8l6-7 7 8zM16 10l9-2-2 5zM35 7l8 3-8 3z" fill="#3c4045"/><path d="M24 9h4v3h-4z" fill="#3ac"/><path d="M36 6h4v4h-4z" fill="#c63"/></svg></div>
  </div>
</div>
</body>
</html>
```

FILE: styles.css
```css
* { box-sizing: border-box; }
html, body { margin: 0; padding: 0; }
body { font-family: "Liberation Sans", Arial, sans-serif; color: #555; }
.defs { position: absolute; width: 0; height: 0; }

.desktop { position: relative; width: 2880px; height: 1800px; overflow: hidden; background: #0f2436; }
.desk-tile { position: absolute; }
.desk-red { left: 2826px; top: 1716px; width: 32px; height: 44px; background: #a80f2e; }
.desk-grey { left: 2858px; top: 1716px; width: 22px; height: 44px; background: #a9abac; }
.desk-band { left: 2826px; top: 1760px; width: 54px; height: 20px; background: #d8d8d8; }
.desk-label { left: 0; top: 1690px; width: 60px; height: 95px; background: #efefef; display: flex; flex-direction: column; overflow: hidden; }
.desk-safari { width: 60px; height: 60px; margin: 3px 0 0 8px; flex: none; }
.desk-name { font-size: 17px; color: #666; margin: 11px 0 0 3px; white-space: nowrap; }

/* macOS menu bar */
.menubar { position: relative; z-index: 5; height: 46px; display: flex; align-items: center; padding: 0 46px 2px 43px; background: linear-gradient(90deg, #bde0f4, #c7e3f2 60%, #e2eaf0); border-bottom: 2px solid #2a4a63; font-size: 28.500px; color: #0c2b3f; }
.m-apple { width: 26px; height: 32px; margin-right: 40px; flex: none; }
.m-items { display: flex; gap: 38px; }
.m-status { margin-left: auto; display: flex; align-items: center; font-size: 29px; }
.m-status svg { flex: none; }
.m-user { margin-left: 33px; }
.m-search { margin-left: 31px; }
.m-siri { margin-left: 35px; }
.m-list { margin-left: 26px; }

/* Window behind */
.win-back { position: absolute; left: 0; top: 46px; width: 2850px; height: 1657px; display: flex; flex-direction: column; background: #e8eaec; border-radius: 14px; overflow: hidden; }
.wb-head { height: 84px; display: flex; gap: 16px; align-items: center; padding: 0 0 0 26px; background: linear-gradient(100deg, #eef0f2, #c9cacc 112px); }
.wb-dot { width: 24px; height: 24px; border-radius: 50%; background: #d7d8d9; border: 1px solid #c8c8c8; }
.wb-tools { height: 72px; display: flex; gap: 36px; align-items: center; padding-left: 30px; background: linear-gradient(100deg, #fff 40px, #ccc 112px); border-bottom: 2px solid #ddd; }
.wb-arrow { width: 28px; height: 28px; flex: none; }
.wb-nav { height: 104px; width: 112px; padding: 10px 0 0 33px; display: flex; align-items: center; overflow: hidden; background: #2b3944; border-top: 9px solid #222d36; border-bottom: 2px solid #1c252d; color: #eee; font-size: 22px; letter-spacing: 6px; white-space: nowrap; }
.wb-side { list-style: none; margin: 0; padding: 82px 0 0; width: 112px; height: 1027px; display: flex; flex-direction: column; background: #2e3d4b; border-bottom: 2px solid #1c252d; }
.wb-side li { height: 120px; flex: none; padding-left: 36px; }
.wb-side li:last-child { height: 32px; }
.wb-side svg { width: 32px; height: 32px; display: block; }
.wb-btns { width: 112px; height: 270px; padding: 17px 0 0 32px; display: flex; flex-direction: column; gap: 32px; background: #252e38; }
.wb-btn { position: relative; width: 100%; height: 100px; border-radius: 8px 0 0 8px; display: flex; align-items: center; }
.wb-blue { background: linear-gradient(90deg, #1cb6e4, #1593bd); padding-left: 34px; }
.wb-blue svg { width: 32px; height: 42px; flex: none; }
.wb-purple { background: linear-gradient(90deg, #9d52d8, #7f3fb0); height: 104px; padding-left: 28px; }
.wb-purple svg { width: 48px; height: 43px; flex: none; }
.wb-notif { position: absolute; right: 0; top: 11px; width: 20px; height: 23px; background: #d99221; border-radius: 50% 0 0 50%; }
.wb-dl { width: 112px; flex: 1; display: flex; align-items: center; padding-left: 44px; background: linear-gradient(90deg, #fff, #ddd); }
.wb-zip { position: relative; width: 24px; height: 30px; flex: none; border: 1px solid #bbb; background: #f5f5f5; border-radius: 2px; font-size: 7px; color: #444; text-align: center; padding-top: 19px; margin-top: -4px; }
.wb-zip i { position: absolute; left: 10px; top: 0; width: 4px; height: 16px; background: #333; }
.wb-u { margin: 12px 0 0 31px; font-size: 20px; color: #444; }

/* Front window */
.win-front { position: absolute; left: 112px; top: 53px; right: 0; height: 1663px; display: flex; flex-direction: column; border-radius: 16px; overflow: hidden; background: #fff; box-shadow: -2px 0 6px rgba(0,0,0,.25); z-index: 2; }

.tabstrip { height: 85px; flex: none; display: flex; align-items: flex-end; background: #dee1e6; }
.lights { width: 156px; height: 85px; display: flex; gap: 16px; padding: 32px 0 0 26px; flex: none; }
.lights i { width: 24px; height: 24px; border-radius: 50%; }
.l-r { background: #ff5f57; }
.l-y { background: #febc2e; }
.l-g { background: #2fc94a; }
.tab { position: relative; width: 480px; height: 68px; flex: none; display: flex; align-items: center; padding: 0 23px 0 24px; font-size: 24px; color: #3c4043; border-radius: 16px 16px 0 0; }
.tab-on { background: #fff; color: #333; }
.tab-on::before, .tab-on::after { content: ""; position: absolute; bottom: 0; width: 12px; height: 12px; }
.tab-on::before { left: -12px; background: radial-gradient(circle at 0 0, #dee1e6 12px, #fff 12.500px); }
.tab-on::after { right: -12px; background: radial-gradient(circle at 100% 0, #dee1e6 12px, #fff 12.500px); }
.fav { width: 30px; height: 32px; flex: none; }
.tab-text { margin-left: 18px; flex: 1; white-space: nowrap; overflow: hidden; }
.tab-fade { -webkit-mask-image: linear-gradient(90deg, #000 90%, transparent); mask-image: linear-gradient(90deg, #000 90%, transparent); }
.tab-x { width: 16px; height: 16px; flex: none; margin-left: 14px; }
.tab-off { width: 476px; padding: 0 24px 0 22px; }
.tab-sep { width: 2px; height: 40px; margin: 0 0 13px 0; background: #9aa0a6; flex: none; }
.tab-new { width: 24px; height: 24px; margin: 0 0 21px 31px; flex: none; }

.toolbar { height: 74px; flex: none; display: flex; align-items: center; padding-left: 12px; background: #fff; border-bottom: 2px solid #e6e6e6; }
.tb-btn { width: 64px; height: 60px; flex: none; display: flex; align-items: center; justify-content: center; }
.omni { width: 1674px; height: 60px; margin-left: 10px; flex: none; display: flex; align-items: center; padding: 0 18px 0 26px; border: 4px solid #a0c3f7; border-radius: 30px; font-size: 28.800px; color: #5f6368; }
.omni-lock { width: 18px; height: 24px; flex: none; }
.omni-url { margin-left: 22px; white-space: nowrap; flex: 1; }
.omni-url b { font-weight: 400; color: #202124; }
.omni-star { width: 28px; height: 28px; flex: none; }
.exts { display: flex; margin-left: 10px; }
.ext { position: relative; width: 64px; height: 60px; display: flex; align-items: center; justify-content: center; }
.ext-m { color: #c8101c; font-size: 30px; }
.ext-m i { font-style: normal; color: #555; font-weight: 700; font-size: 24px; }
.ext-badge { position: absolute; left: 34px; top: 36px; width: 24px; height: 24px; background: #555; color: #fff; border-radius: 4px; font-size: 20px; font-weight: 400; line-height: 24px; text-align: center; }
.tb-sep { width: 2px; height: 32px; margin: 0 12px; background: #ccc; flex: none; }

.awsnav { height: 80px; flex: none; display: flex; align-items: center; background: #232f3e; color: #fff; padding: 0 120px 0 121px; }
.aws-logo { width: 80px; height: 54px; flex: none; display: flex; flex-direction: column; align-items: center; }
.aws-logo span { font-size: 44px; line-height: 32px; color: #fff; }
.aws-logo svg { width: 80px; height: 20px; margin-top: 2px; }
.nav-main { display: flex; align-items: center; margin-left: 111px; padding-top: 2px; font-size: 30px; }
.caret { width: 0; height: 0; border-left: 8px solid transparent; border-right: 8px solid transparent; border-top: 8px solid #bbb; margin-left: 24px; flex: none; }
.nav-b { margin-left: 59px; }
.nav-pin { width: 26px; height: 30px; margin-left: 61px; flex: none; }
.nav-right { margin-left: auto; display: flex; align-items: center; padding-top: 2px; font-size: 27px; }
.nav-bell { width: 32px; height: 36px; flex: none; margin-right: 54px; }
.nav-acct { font-size: 27.500px; }
.nav-global { margin-left: 49px; font-size: 26.500px; }
.nav-support { margin-left: 51px; }
.nav-right .caret { margin-left: 17px; }

.content { flex: 1; min-height: 0; display: flex; overflow: hidden; background: #fff; }
.rail { width: 23px; flex: none; border-right: 3px solid #ccc; position: relative; }
.rail-tab { position: absolute; left: 20px; top: 120px; width: 30px; height: 73px; padding: 0; background: #fff; border: 2px solid #ccc; border-left: 0; border-radius: 0 8px 8px 0; }
.rail-tab i { display: block; margin-left: 12px; width: 0; height: 0; border-left: 11px solid #222; border-top: 8px solid transparent; border-bottom: 8px solid transparent; }
.grid { flex: 1; display: grid; grid-template-columns: 598px 598px 1079px; grid-template-rows: 1217px 499px; column-gap: 62px; row-gap: 61px; padding: 54px 0 0 142px; }

.card { position: relative; height: 499px; align-self: start; display: flex; flex-direction: column; border: 2px solid #808080; background: #fff; box-shadow: 1px 4px 6px rgba(0,0,0,.3); padding: 0 20px; }
.wm { position: absolute; left: 0; top: 0; width: 594px; height: 495px; }
.card-title { position: relative; margin: 46px 0 0; padding-left: 8px; font-size: 48px; line-height: 60px; font-weight: 400; color: #2b2b2b; text-align: center; white-space: nowrap; }
.card-desc { position: relative; margin: 56px 0 0; padding: 0 27px; font-size: 28.400px; line-height: 37px; color: #555; text-align: center; }
.link { color: #3a99d6; }
.card-link { position: relative; display: block; margin-top: 29px; font-size: 27.600px; line-height: 36px; text-align: center; }
.card-foot { position: relative; margin-top: auto; height: 100px; padding-top: 26px; display: flex; gap: 29px; border-top: 3px solid #bbb; font-size: 32px; line-height: 44px; color: #c4c4c4; }
.dot { width: 40px; height: 40px; border-radius: 50%; background: #bdbdbd; flex: none; }

.dialog { grid-column: 3; grid-row: 1; align-self: start; height: 1217px; display: flex; flex-direction: column; border: 2px solid #808080; background: #fff; box-shadow: 1px 4px 6px rgba(0,0,0,.3); }
.dlg-head { position: relative; height: 150px; flex: none; display: flex; align-items: center; justify-content: center; padding: 0 76px 2px 0; background: #52a8da; overflow: hidden; }
.dlg-globe { position: absolute; left: 0; top: 0; width: 300px; height: 150px; }
.dlg-title { position: relative; margin: 0; font-size: 49px; font-weight: 400; color: #fff; }
.dlg-x { position: absolute; right: 42px; top: 54px; width: 40px; height: 40px; }
.dlg-body { flex: 1; display: flex; flex-direction: column; padding: 48px 40px 35px 39px; }
.dlg-opts { padding-left: 38px; display: flex; flex-direction: column; align-items: flex-start; font-size: 28.400px; }
.endpoint { margin: 0; font-size: 29px; line-height: 36px; color: #555; white-space: nowrap; }
.opt { display: flex; align-items: flex-start; height: 50px; line-height: 40px; color: #555; }
.opt-1 { margin-top: 30px; }
.opt-2 { margin-top: 38px; }
.opt-3 { margin-top: 32px; }
.radio { width: 50px; height: 50px; border-radius: 50%; border: 2px solid #999; background: #fff; flex: none; margin-right: 31px; }
.radio-on { background: #3a99d6; box-shadow: inset 0 0 0 4px #fff; }
.info { width: 26px; height: 26px; flex: none; }
.opt .info { margin: 4px 0 0 5px; }
.opt-link { margin-left: 16px; font-size: 27.600px; }
.f-label { display: flex; align-items: center; gap: 12px; margin-left: 74px; height: 36px; font-size: 26.500px; color: #6b6b6b; white-space: nowrap; }
.f-l1 { margin-top: 28px; }
.f-l2 { margin-top: 26px; }
.f-l3 { letter-spacing: -.33px; }
.f-input { display: block; width: 739px; height: 64px; margin: 36px 0 0 70px; padding: 0 21px; border: 2px solid #8a9095; border-radius: 3px; font: 28.200px "Liberation Sans", Arial, sans-serif; color: #444; background: #fff; }
.f-area { display: block; width: 736px; height: 140px; margin: 36px 0 0 70px; padding: 10px; border: 2px solid #ccc; border-radius: 6px; font: 28.200px "Liberation Sans", Arial, sans-serif; background: #fff; }
.dlg-rule { width: 100%; height: 2px; margin: 10px 0 0; border: 0; background: #f2f2f2; }
.dlg-foot { margin-top: 50px; display: flex; justify-content: space-between; align-items: flex-start; }
.dlg-status { display: flex; gap: 30px; font-size: 28.700px; line-height: 38px; color: #555; }
.dlg-status svg { width: 40px; height: 40px; flex: none; }
.dlg-btns { display: flex; gap: 28px; }
.btn { height: 66px; padding: 2px 0 0; font: 700 27.600px "Liberation Sans", Arial, sans-serif; }
.btn-ghost { width: 133px; border: 2px solid #3a99d6; background: #fff; color: #3a99d6; }
.btn-fill { width: 108px; border: 0; background: #3a99d6; color: #fff; }

.awsfoot { height: 60px; flex: none; display: flex; align-items: center; justify-content: space-between; padding: 0 64px 2px 56px; background: #232f3e; color: #eee; }
.foot-left { display: flex; align-items: center; font-size: 28.500px; }
.foot-ic { width: 32px; height: 34px; flex: none; }
.foot-fb { margin: 0 40px 0 22px; }
.foot-globe { margin-right: 20px; }
.foot-lang { font-size: 27px; }
.foot-right { display: flex; gap: 48px; font-size: 24.200px; }
.foot-copy { color: #aab1b5; }

/* Dock */
.dock { position: absolute; z-index: 4; left: 54px; top: 1710px; width: 2772px; height: 90px; display: flex; padding: 12px 0 0 6px; background: linear-gradient(90deg, #6c8194, #45617b 6%, #4a627b 92%, #7b6b84); border-radius: 14px 14px 0 0; }
.di { position: relative; width: 72.900px; height: 60px; flex: none; display: flex; justify-content: center; }
.di > svg { width: 60px; height: 60px; overflow: visible; }
.di.on::after { content: ""; position: absolute; left: 50%; top: 68px; width: 7px; height: 7px; margin-left: -3px; border-radius: 50%; background: #000; }
.dock-sep { width: 31px; flex: none; position: relative; }
.dock-sep::before { content: ""; position: absolute; left: 14px; top: 0; width: 2px; height: 66px; background: #222d38; }
.badge { position: absolute; right: 0; top: -2px; min-width: 25px; height: 25px; padding: 0 3px; border-radius: 13px; background: #f23c3c; color: #fff; font-size: 17px; line-height: 25px; text-align: center; }
.badge-wide { right: 3px; width: 40px; padding: 0; font-size: 15px; }
.cal-m { font-size: 9px; fill: #fff; }
.cal-d { font-size: 32px; fill: #222; }
.map-3d { font-size: 10px; fill: #555; }
.tv-t { font-size: 24px; fill: #fff; }
.ps-ic { width: 60px; height: 60px; border: 3px solid #31c5f0; border-radius: 8px; background: #052633; color: #cfeefa; font-size: 38px; line-height: 52px; text-align: center; }
```
